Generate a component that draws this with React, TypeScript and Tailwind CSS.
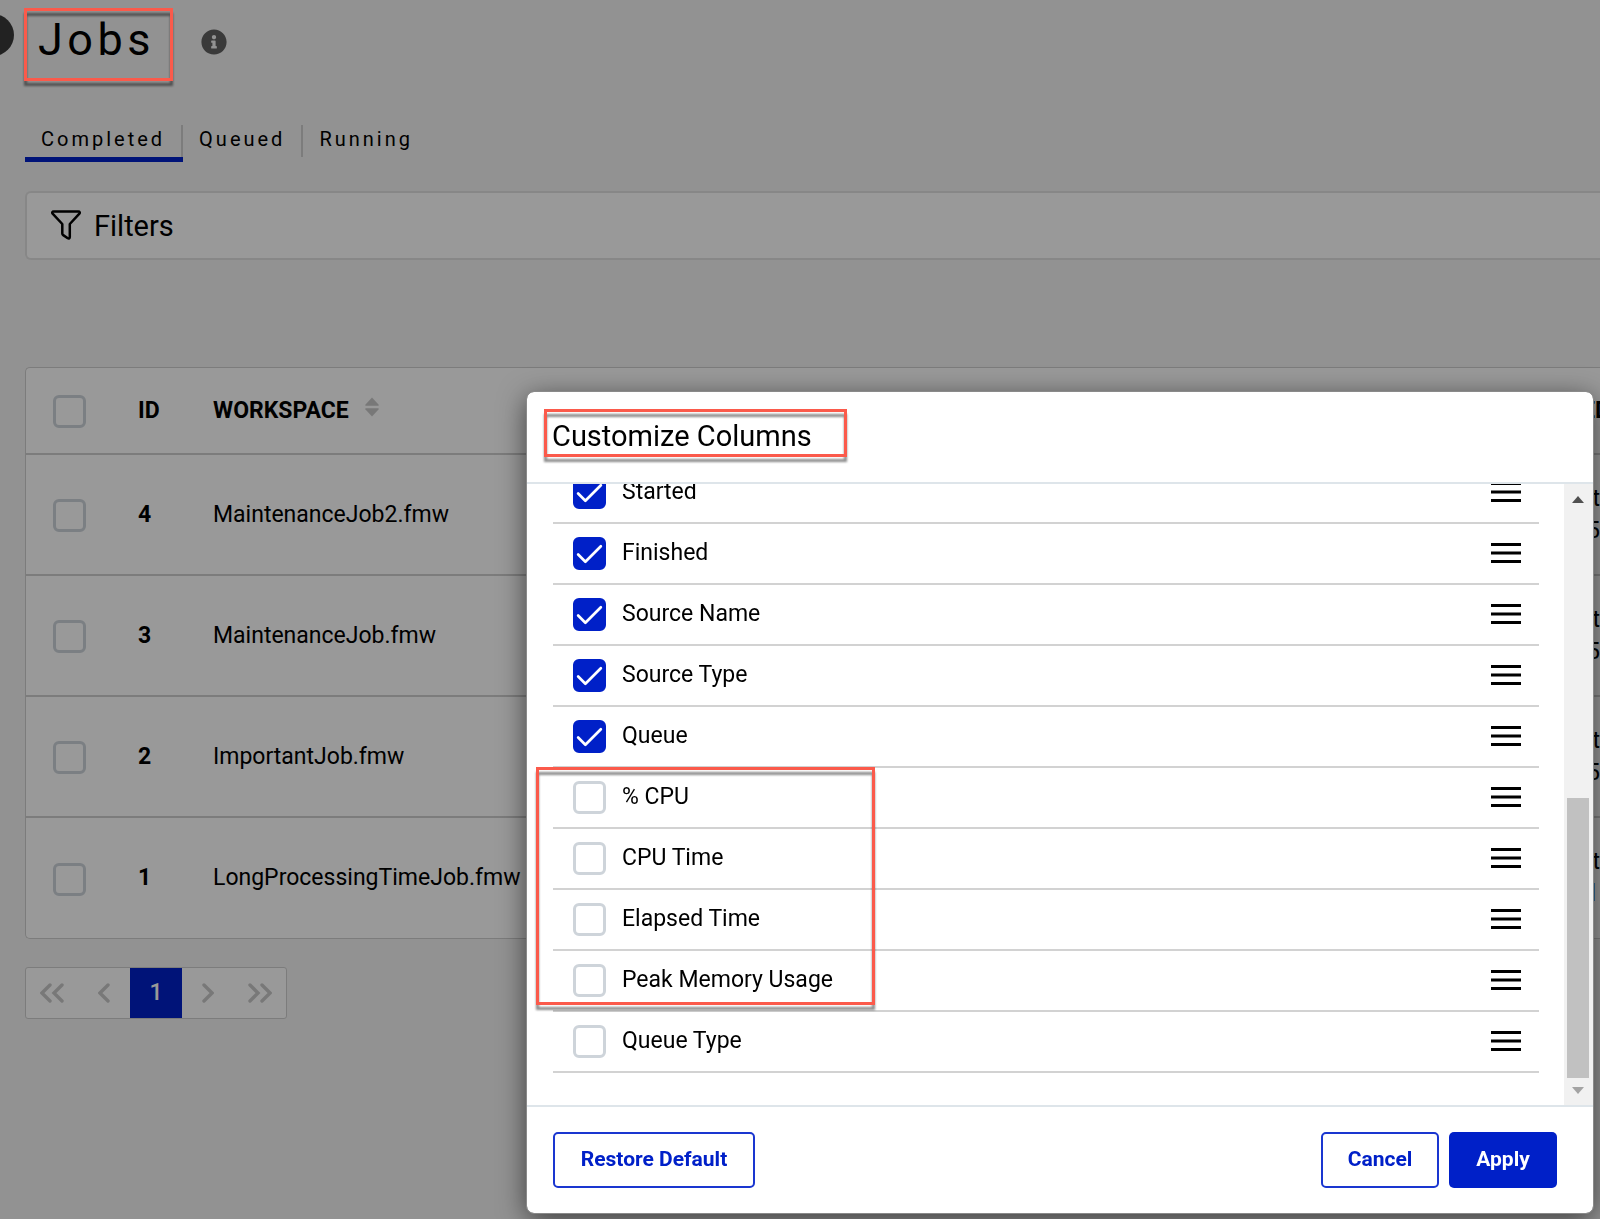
import { useState } from "react";
import clsx from "clsx";
import { FaInfoCircle } from "react-icons/fa";

interface Job {
  id: number;
  workspace: string;
  started: string[];
  link?: boolean;
}

interface Column {
  name: string;
  visible: boolean;
}

const tabs = ["Completed", "Queued", "Running"];

const jobs: Job[] = [
  { id: 4, workspace: "MaintenanceJob2.fmw", started: ["t", "5"] },
  { id: 3, workspace: "MaintenanceJob.fmw", started: ["t", "5"] },
  { id: 2, workspace: "ImportantJob.fmw", started: ["t", "5"] },
  { id: 1, workspace: "LongProcessingTimeJob.fmw", started: ["t", "l"], link: true }
];

const defaultColumns: Column[] = [
  { name: "Started", visible: true },
  { name: "Finished", visible: true },
  { name: "Source Name", visible: true },
  { name: "Source Type", visible: true },
  { name: "Queue", visible: true },
  { name: "% CPU", visible: false },
  { name: "CPU Time", visible: false },
  { name: "Elapsed Time", visible: false },
  { name: "Peak Memory Usage", visible: false },
  { name: "Queue Type", visible: false }
];

// Red callout frame; the drop shadow falls both inside and outside of it
function Highlight({ className }: { className: string }) {
  return (
    <span
      aria-hidden="true"
      className={clsx("pointer-events-none absolute border-3 border-[#fb5a4b] drop-shadow-[0_5px_1px_rgba(0,0,0,0.45)]", className)}
    />
  );
}

interface CheckboxProps {
  id?: string;
  label?: string;
  checked?: boolean;
  onChange?: () => void;
}

function Checkbox({ id, label, checked, onChange }: CheckboxProps) {
  return (
    <span className="grid h-[33px] w-[33px] shrink-0">
      <input
        id={id}
        type="checkbox"
        aria-label={label}
        checked={checked}
        onChange={onChange}
        className="peer col-start-1 row-start-1 h-[33px] w-[33px] appearance-none rounded-[6px] border-3 border-[#ced4da] bg-white checked:border-[#0020c8] checked:bg-[#0020c8]"
      />
      <svg
        viewBox="0 0 32 32"
        className="pointer-events-none col-start-1 row-start-1 hidden h-[33px] w-[33px] fill-none stroke-white stroke-[2.6] peer-checked:block"
        strokeLinecap="round"
        strokeLinejoin="round"
      >
        <path d="M5 17l7 7L27 9" />
      </svg>
    </span>
  );
}

function FilterIcon() {
  return (
    <svg viewBox="0 0 30 30" className="mb-[2px] h-[30px] w-[30px] fill-none stroke-black stroke-[2.5]" strokeLinejoin="round">
      <path d="M2.6 1.6h24.8c1.3 0 1.8 1.2 1 2.1L18.8 14v13c0 1.3-1 1.8-2 1.2l-4.6-3.1c-.6-.4-.9-.9-.9-1.5V14L1.6 3.7c-.8-.9-.3-2.1 1-2.1z" />
    </svg>
  );
}

function SortIcon() {
  return (
    <svg viewBox="0 0 14 20" className="mb-2 h-5 w-[14px] fill-[#c9c9c9]">
      <path d="M7 .5l6.500 7c.5.7.2 1.300-.6 1.300H1.100c-.8 0-1.100-.6-.6-1.300z" />
      <path d="M7 19.500l6.500-7c.5-.7.2-1.300-.6-1.300H1.100c-.8 0-1.100.6-.6 1.300z" />
    </svg>
  );
}

function Chevron({ double, right }: { double?: boolean; right?: boolean }) {
  return (
    <svg
      viewBox={double ? "0 0 24 20" : "0 0 12 20"}
      className={clsx("h-5 fill-none stroke-[#c9c9c9] stroke-[3.4]", double ? "w-6" : "w-3", right && "rotate-180")}
      strokeLinecap="round"
    >
      <path d="M10 2L2 10l8 8" />
      {double ? <path d="M22 2l-8 8 8 8" /> : null}
    </svg>
  );
}

function DragHandle({ name }: { name: string }) {
  return (
    <button type="button" aria-label={`Move ${name}`} className="mb-[2px] cursor-grab">
      <svg viewBox="0 0 30 20" className="h-5 w-[30px] fill-black">
        <path d="M0 0h30v3H0zM0 8.500h30v3H0zM0 17h30v3H0z" />
      </svg>
    </button>
  );
}

function JobsTable() {
  return (
    <div className="mt-[107px] rounded-l-[5px] border border-r-0 border-[#cfcfcf] bg-white">
      <table className="w-full table-fixed text-left text-[23px] leading-8">
        <thead>
          <tr className="h-[86px]">
            <th className="w-[112px] pt-[2px] pl-[27px]">
              <Checkbox label="Select all jobs" />
            </th>
            <th className="w-[75px] font-bold">ID</th>
            <th className="font-bold">
              <span className="flex items-center gap-4">
                WORKSPACE
                <SortIcon />
              </span>
            </th>
            <th className="w-[18px] font-bold whitespace-nowrap">ED</th>
          </tr>
        </thead>
        <tbody>
          {jobs.map((job) => (
            <tr key={job.id} className="h-[121px] border-t-2 border-[#cfcfcf]">
              <td className="pt-[2px] pl-[27px]">
                <Checkbox label={`Select job ${job.id}`} />
              </td>
              <td className="font-bold">{job.id}</td>
              <td>{job.workspace}</td>
              <td className="text-right">
                <div>{job.started[0]}</div>
                <div className={clsx(job.link && "pr-1 text-[#0020c8]")}>{job.started[1]}</div>
              </td>
            </tr>
          ))}
        </tbody>
      </table>
    </div>
  );
}

function Pagination() {
  const button = "grid h-[50px] w-[52px] place-items-center";
  return (
    <nav aria-label="Pages" className="mt-7 flex w-fit rounded-[3px] border border-[#cfcfcf] bg-white">
      <button type="button" aria-label="First page" className={button}>
        <Chevron double />
      </button>
      <button type="button" aria-label="Previous page" className={button}>
        <Chevron />
      </button>
      <button type="button" className={clsx(button, "bg-[#0020c8] text-[23px] font-medium text-white")}>
        1
      </button>
      <button type="button" aria-label="Next page" className={button}>
        <Chevron right />
      </button>
      <button type="button" aria-label="Last page" className={button}>
        <Chevron double right />
      </button>
    </nav>
  );
}

function CustomizeColumns() {
  const [columns, setColumns] = useState(defaultColumns);

  const toggle = (name: string) =>
    setColumns((current) => current.map((column) => (column.name === name ? { ...column, visible: !column.visible } : column)));

  return (
    <section
      role="dialog"
      aria-labelledby="dialog-title"
      className="relative flex w-[1066px] max-w-full flex-col rounded-[7px] bg-white shadow-[0_6px_28px_rgba(0,0,0,0.6)] outline outline-[#8a8a8a]"
    >
      <header className="flex h-[92px] items-center border-b-2 border-[#dee5ea] px-[25px] pb-[2px]">
        <h2 id="dialog-title" className="text-[29px] leading-9">
          Customize Columns
        </h2>
        <Highlight className="top-[17px] left-[17px] h-12 w-[303px]" />
      </header>

      <div className="relative flex h-[621px]">
        <ul className="flex min-w-0 flex-1 flex-col justify-end overflow-hidden pr-[25px] pb-8 pl-[26px]">
          {columns.map((column) => {
            const id = `column-${column.name}`;
            return (
              <li key={column.name} className="flex h-[61px] shrink-0 items-center border-b-2 border-[#d2d2d2] pr-[18px] pl-5">
                <Checkbox id={id} checked={column.visible} onChange={() => toggle(column.name)} />
                <label htmlFor={id} className="flex-1 pb-[2px] pl-4 text-[23px] leading-8">
                  {column.name}
                </label>
                <DragHandle name={column.name} />
              </li>
            );
          })}
        </ul>
        <div aria-hidden="true" className="flex w-[29px] flex-col items-center bg-[#f1f1f1] pt-3 pr-[2px] pb-[11px]">
          <svg viewBox="0 0 12 7" className="h-[7px] w-3 fill-[#505050]">
            <path d="M6 0l6 7H0z" />
          </svg>
          <div className="mt-auto mb-[9px] h-[280px] w-[22px] bg-[#c1c1c1]" />
          <svg viewBox="0 0 12 7" className="h-[7px] w-3 fill-[#a3a3a3]">
            <path d="M0 0h12L6 7z" />
          </svg>
        </div>
        <Highlight className="top-[283px] left-[9px] h-[238px] w-[339px]" />
      </div>

      <footer className="flex h-[108px] items-center gap-[10px] border-t-2 border-[#dee5ea] pr-9 pl-[26px] text-[21px] font-bold">
        <button
          type="button"
          onClick={() => setColumns(defaultColumns)}
          className="mr-auto h-14 w-[202px] rounded-[5px] border-2 border-[#1a36d0] text-[#0020c8]"
        >
          Restore Default
        </button>
        <button type="button" className="h-14 w-[118px] rounded-[5px] border-2 border-[#1a36d0] text-[#0020c8]">
          Cancel
        </button>
        <button type="button" className="h-14 w-[108px] rounded-[5px] bg-[#0020c8] text-white">
          Apply
        </button>
      </footer>
    </section>
  );
}

export default function App() {
  return (
    <div className="relative min-h-screen overflow-hidden bg-[#f3f3f3] font-[Roboto,'Liberation_Sans',sans-serif] text-black">
      <span className="absolute top-[14px] -left-7 h-[42px] w-[42px] rounded-full bg-[#3a3a3a]" />

      <main className="pl-[25px]">
        <header className="relative flex h-[84px] items-center gap-[46px] pl-[13px]">
          <h1 className="pb-1 text-[45px] leading-[60px] tracking-widest">Jobs</h1>
          <FaInfoCircle className="h-[26px] w-[26px] text-[#616161]" />
          <Highlight className="top-2 -left-px z-20 h-[73px] w-[149px]" />
        </header>

        <nav className="mt-[41px] flex text-xl leading-7 tracking-[0.15em]">
          {tabs.map((tab, index) => (
            <button
              key={tab}
              type="button"
              className={clsx("border-b-5", index === 0 ? "border-[#0020c8]" : "border-transparent")}
            >
              <span className={clsx("block px-4 pb-1", index < tabs.length - 1 && "border-r-2 border-[#cfcfcf]")}>{tab}</span>
            </button>
          ))}
        </nav>

        <section className="mt-[29px] flex h-[69px] items-center gap-[13px] rounded-l-[6px] border-2 border-r-0 border-[#e2e2e2] bg-white pl-6">
          <FilterIcon />
          <h2 className="text-[29px] leading-9">Filters</h2>
        </section>

        <JobsTable />
        <Pagination />
      </main>

      <div className="fixed inset-0 z-10 bg-black/40" />
      <div className="fixed inset-0 z-30 flex items-end justify-end pr-[7px] pb-[6px]">
        <CustomizeColumns />
      </div>
    </div>
  );
}
